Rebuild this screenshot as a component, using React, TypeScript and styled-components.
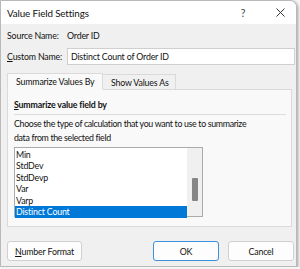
import React from "react";
import styled, { createGlobalStyle } from "styled-components";

const GlobalStyle = createGlobalStyle`
  html, body { margin: 0; padding: 0; background: #f4f4f4; }
  body { font-family: Lato, "Noto Sans", sans-serif; font-size: 8.8px; letter-spacing: -0.17px; color: #111; white-space: nowrap; }
  * { box-sizing: border-box; }
`;

const Window = styled.div`
  width: 297px;
  height: 267px;
  border: 1px solid #b9b9b9;
  border-top-right-radius: 7px;
  background: #f0f0f0;
  display: flex;
  flex-direction: column;
  overflow: hidden;
  box-shadow: 1px 1px 3px rgba(0, 0, 0, 0.35);
`;

const TitleBar = styled.div`
  height: 23px;
  background: #ffffff;
  display: flex;
  align-items: center;
  padding-left: 6px;
  flex-shrink: 0;
`;

const Title = styled.span`
  font-size: 9.8px;
  letter-spacing: -0.12px;
  color: #111;
`;

const TitleButton = styled.span<{ $w: number }>`
  width: ${(p) => p.$w}px;
  height: 23px;
  display: flex;
  align-items: center;
  justify-content: center;
  font-size: 10.5px;
  color: #444;
`;

const TitleButtons = styled.div`
  margin-left: auto;
  display: flex;
  align-items: center;
  padding-right: 11px;
  gap: 28px;
`;

const Body = styled.div`
  flex: 1;
  display: flex;
  flex-direction: column;
  padding: 0 1px 0 6px;
`;

const Row = styled.div<{ $mt: number; $h: number }>`
  display: flex;
  align-items: center;
  margin-top: ${(p) => p.$mt}px;
  height: ${(p) => p.$h}px;
`;

const Label = styled.span`
  width: 60px;
  flex-shrink: 0;
`;

const Input = styled.div`
  flex: 1;
  height: 17px;
  background: #fff;
  border: 1px solid #cfcfcf;
  display: flex;
  align-items: center;
  padding-left: 3px;
`;

const Mn = styled.span`
  text-decoration: underline;
  text-underline-offset: 1px;
`;

const Tabs = styled.div`
  display: flex;
  margin-top: 8px;
  height: 17px;
  align-items: flex-end;
  position: relative;
  z-index: 1;
`;

const Tab = styled.div<{ $active?: boolean }>`
  height: ${(p) => (p.$active ? 17 : 16)}px;
  width: ${(p) => (p.$active ? 96 : 73)}px;
  padding-left: 8px;
  display: flex;
  align-items: center;
  border: 1px solid #dadada;
  border-bottom: ${(p) => (p.$active ? "1px solid #f9f9f9" : "1px solid #dadada")};
  border-left: ${(p) => (p.$active ? "1px solid #dadada" : "none")};
  background: ${(p) => (p.$active ? "#f9f9f9" : "#f0f0f0")};
`;

const Panel = styled.div`
  margin-top: -1px;
  margin-right: 3px;
  height: 138px;
  background: #f9f9f9;
  border: 1px solid #dadada;
  padding: 8px 5px 0 6px;
  display: flex;
  flex-direction: column;
`;

const Heading = styled.div`
  font-weight: 700;
  line-height: 14px;
  height: 17px;
  border-bottom: 1px solid #dcdcdc;
`;

const Desc = styled.div`
  margin-top: 2px;
  line-height: 14px;
  letter-spacing: -0.32px;
`;

const ListBox = styled.div`
  margin-top: 2px;
  width: 189px;
  height: 70px;
  border: 1px solid #ababab;
  background: #fff;
  display: flex;
`;

const Items = styled.div`
  flex: 1;
  display: flex;
  flex-direction: column;
  padding-top: 0.5px;
`;

const Item = styled.div<{ $sel?: boolean }>`
  height: 11.5px;
  line-height: 11.5px;
  padding-left: 1px;
  background: ${(p) => (p.$sel ? "#0078d7" : "transparent")};
  color: ${(p) => (p.$sel ? "#fff" : "#111")};
`;

const ScrollBar = styled.div`
  width: 15px;
  background: #f0f0f0;
  display: flex;
  justify-content: center;
  padding-top: 30px;
`;

const Thumb = styled.div`
  width: 6px;
  height: 23px;
  border-radius: 1px;
  background: #868686;
`;

const Footer = styled.div`
  margin-top: 14px;
  display: flex;
  align-items: center;
`;

const Button = styled.div<{ $w: number; $default?: boolean; $ml?: number }>`
  width: ${(p) => p.$w}px;
  height: 20px;
  margin-left: ${(p) => p.$ml ?? 0}px;
  background: #fdfdfd;
  border: 1px solid ${(p) => (p.$default ? "#3c8fd8" : "#d0d0d0")};
  border-radius: 3px;
  display: flex;
  align-items: center;
  justify-content: center;
`;

const items = ["Min", "StdDev", "StdDevp", "Var", "Varp", "Distinct Count"];

export default function App() {
  return (
    <>
      <GlobalStyle />
      <Window>
        <TitleBar>
          <Title>Value Field Settings</Title>
          <TitleButtons>
            <TitleButton $w={8}>?</TitleButton>
            <TitleButton $w={10}>
              <svg width="9" height="9" viewBox="0 0 9 9">
                <path d="M0.5 0.5 L8.5 8.5 M8.5 0.5 L0.5 8.5" stroke="#333" strokeWidth="1" />
              </svg>
            </TitleButton>
          </TitleButtons>
        </TitleBar>
        <Body>
          <Row $mt={4} $h={14}>
            <Label>Source Name:</Label>
            <span>Order ID</span>
          </Row>
          <Row $mt={6} $h={17}>
            <Label>
              <Mn>C</Mn>ustom Name:
            </Label>
            <Input>Distinct Count of Order ID</Input>
          </Row>
          <Tabs>
            <Tab $active>Summarize Values By</Tab>
            <Tab>Show Values As</Tab>
          </Tabs>
          <Panel>
            <Heading>
              <Mn>S</Mn>ummarize value field by
            </Heading>
            <Desc>
              Choose the type of calculation that you want to use to summarize
              <br />
              data from the selected field
            </Desc>
            <ListBox>
              <Items>
                {items.map((it) => (
                  <Item key={it} $sel={it === "Distinct Count"}>
                    {it}
                  </Item>
                ))}
              </Items>
              <ScrollBar>
                <Thumb />
              </ScrollBar>
            </ListBox>
          </Panel>
          <Footer>
            <Button $w={75}>
              <span>
                <Mn>N</Mn>umber Format
              </span>
            </Button>
            <Button $w={66} $ml={71} $default>
              OK
            </Button>
            <Button $w={66} $ml={9}>
              Cancel
            </Button>
          </Footer>
        </Body>
      </Window>
    </>
  );
}
